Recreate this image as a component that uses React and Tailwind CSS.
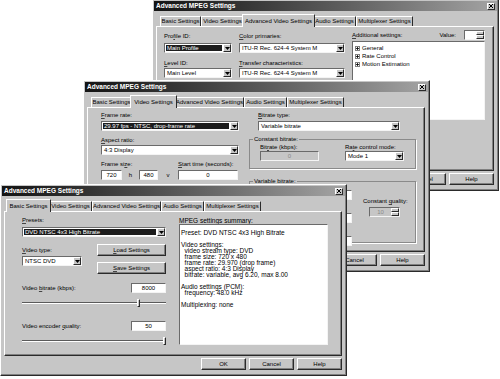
import React from 'react'

const TABS = [
  ['Basic Settings', 'w-[41px]'],
  ['Video Settings', 'w-[43px]'],
  ['Advanced Video Settings', 'w-[69px]'],
  ['Audio Settings', 'w-[43px]'],
  ['Multiplexer Settings', 'w-[57px]'],
]

const raised = 'border border-t-white border-l-white border-b-[#2a2a2a] border-r-[#2a2a2a]'
const sunken = 'border border-t-[#6a6a6a] border-l-[#6a6a6a] border-b-[#f4f4f4] border-r-[#f4f4f4]'

const U = ({ children }) => <span className="underline underline-offset-[1px] decoration-[#444]">{children}</span>

const Arrow = () => (
  <div className={`w-[8px] h-full bg-[#c6c6c6] ${raised} flex items-center justify-center shrink-0`}>
    <svg width="5" height="3" viewBox="0 0 5 3"><path d="M0 0h5L2.5 3z" fill="#000" /></svg>
  </div>
)

const Select = ({ value, w, hi }) => (
  <div className={`${w} h-[10px] bg-white ${sunken} flex items-stretch`}>
    <div className={`flex-1 m-[1px] flex items-center px-[1px] leading-[6px] whitespace-nowrap overflow-hidden ${hi ? 'bg-[#1c1c1c] text-white' : ''}`}>{value}</div>
    <Arrow />
  </div>
)

const Field = ({ value, w, disabled }) => (
  <div className={`${w} h-[10px] ${disabled ? 'bg-[#c6c6c6] text-[#8a8a8a]' : 'bg-white'} ${sunken} flex items-center justify-center`}>{value}</div>
)

const Spin = ({ value, w, disabled }) => (
  <div className={`${w} h-[10px] ${disabled ? 'bg-[#c6c6c6] text-[#8a8a8a]' : 'bg-white'} ${sunken} flex items-stretch`}>
    <div className="flex-1 flex items-center justify-center">{value}</div>
    <div className="w-[8px] flex flex-col">
      <div className={`flex-1 bg-[#c6c6c6] ${raised}`} />
      <div className={`flex-1 bg-[#c6c6c6] ${raised}`} />
    </div>
  </div>
)

const Btn = ({ children, w = 'w-[45px]' }) => (
  <div className={`${w} h-[12px] bg-[#c6c6c6] ${raised} shadow-[inset_-1px_-1px_0_#808080] flex items-center justify-center`}>{children}</div>
)

const Slider = ({ pos }) => (
  <div className="relative h-[10px] flex items-center">
    <div className="w-full h-[2px] border-t border-t-[#5a5a5a] border-b border-b-white" />
    <div className={`absolute top-[1px] ${pos} w-[3px] h-[8px] bg-[#c6c6c6] ${raised}`} />
  </div>
)

const Tabs = ({ active }) => (
  <div className="h-[15px] pl-[6px] flex items-end">
    {TABS.map(([t, w], i) =>
      i === active ? (
        <div key={t} className={`${w} box-content h-[12px] -mx-[2px] px-[1px] -mb-[1px] relative z-10 bg-[#c6c6c6] border border-b-0 border-t-white border-l-white border-r-[#2a2a2a] flex items-center justify-center whitespace-nowrap`}>{t}</div>
      ) : (
        <div key={t} className={`${w} h-[10px] border border-b-0 border-t-white border-l-white border-r-[#2a2a2a] flex items-center justify-center whitespace-nowrap`}>{t}</div>
      )
    )}
  </div>
)

const Window = ({ pos, active, children }) => (
  <div className={`absolute ${pos} w-[347px] h-[192px] bg-[#c6c6c6] p-[1px] ${raised} shadow-[inset_-1px_-1px_0_#808080] flex flex-col`}>
    <div className="h-[10px] bg-linear-to-r from-[#141414] to-[#a4a4a4] flex items-center justify-between pl-[2px] pr-[2px]">
      <span className="text-white font-bold text-[6.5px] leading-none">Advanced MPEG Settings</span>
      <div className={`w-[8px] h-[7px] bg-[#c6c6c6] ${raised} flex items-center justify-center`}>
        <svg width="4" height="4" viewBox="0 0 4 4"><path d="M0 0L4 4M4 0L0 4" stroke="#000" strokeWidth="1" /></svg>
      </div>
    </div>
    <Tabs active={active} />
    <div className="ml-[2px] mr-[3px] h-[145px] border border-t-white border-l-white border-b-[#2a2a2a] border-r-[#2a2a2a] shadow-[inset_-1px_-1px_0_#808080] flex">
      {children}
    </div>
    <div className="mt-[2px] pr-[3px] flex justify-end gap-[3px]">
      <Btn>OK</Btn>
      <Btn>Cancel</Btn>
      <Btn>Help</Btn>
    </div>
  </div>
)

const Plus = () => (
  <div className="w-[5px] h-[5px] border border-[#808080] bg-white flex items-center justify-center mr-[2px]">
    <svg width="3" height="3" viewBox="0 0 3 3"><path d="M0 1.5h3M1.5 0v3" stroke="#000" strokeWidth="0.8" /></svg>
  </div>
)

const AdvancedWindow = () => (
  <Window pos="left-[152px] top-[-1px]" active={2}>
    <div className="ml-[7px] pt-[6px] w-[68px] flex flex-col">
      <div className="h-[7px] leading-[7px]">Pro<U>f</U>ile ID:</div>
      <div className="mt-[3px]"><Select w="w-[68px]" value="Main Profile" hi /></div>
      <div className="mt-[7px] h-[7px] leading-[7px]"><U>L</U>evel ID:</div>
      <div className="mt-[1px]"><Select w="w-[68px]" value="Main Level" /></div>
    </div>
    <div className="ml-[7px] pt-[6px] w-[106px] flex flex-col">
      <div className="h-[7px] leading-[7px]"><U>C</U>olor primaries:</div>
      <div className="mt-[3px]"><Select w="w-[106px]" value="ITU-R Rec. 624-4 System M" /></div>
      <div className="mt-[7px] h-[7px] leading-[7px]"><U>T</U>ransfer characteristics:</div>
      <div className="mt-[1px]"><Select w="w-[106px]" value="ITU-R Rec. 624-4 System M" /></div>
    </div>
    <div className="ml-[7px] pt-[3px] w-[133px] flex flex-col">
      <div className="h-[10px] flex items-center">
        <span><U>A</U>dditional settings:</span>
        <span className="ml-auto mr-[8px]">Value:</span>
        <Spin w="w-[21px]" value="" />
      </div>
      <div className={`mt-[1px] h-[79px] bg-white ${sunken} pt-[2px] pl-[2px] leading-[8px]`}>
        {['General', 'Rate Control', 'Motion Estimation'].map(t => (
          <div key={t} className="h-[8px] flex items-center"><Plus />{t}</div>
        ))}
      </div>
    </div>
  </Window>
)

const VideoWindow = () => (
  <Window pos="left-[83px] top-[80px]" active={1}>
    <div className="ml-[13px] pt-[4px] w-[138px] flex flex-col">
      <div className="h-[7px] leading-[7px]"><U>F</U>rame rate:</div>
      <div className="mt-[2px]"><Select w="w-[138px]" value="29.97 fps - NTSC, drop-frame rate" hi /></div>
      <div className="mt-[6px] h-[7px] leading-[7px]"><U>A</U>spect ratio:</div>
      <div className="mt-[1px]"><Select w="w-[138px]" value="4:3 Display" /></div>
      <div className="mt-[6px] h-[7px] leading-[7px] flex">
        <span className="w-[77px]">Frame si<U>z</U>e:</span>
        <span><U>S</U>tart time (seconds):</span>
      </div>
      <div className="mt-[2px] flex items-center">
        <Field w="w-[21px]" value="720" />
        <span className="w-[17px] text-center">h</span>
        <Field w="w-[19px]" value="480" />
        <span className="w-[20px] text-center">v</span>
        <Field w="w-[60px]" value="0" />
      </div>
    </div>
    <div className="ml-[10px] pt-[4px] w-[167px] flex flex-col">
      <div className="pl-[9px] h-[7px] leading-[7px]"><U>B</U>itrate type:</div>
      <div className="pl-[9px] mt-[2px]"><Select w="w-[142px]" value="Variable bitrate" /></div>
      <fieldset className="mt-[5px] h-[33px] border border-[#8a8a8a] shadow-[1px_1px_0_white]">
        <legend className="ml-[3px] px-[1px] h-[7px] leading-[7px]">Constant bitrate:</legend>
        <div className="flex pt-[1px]">
          <div className="ml-[10px] w-[59px]">
            <div className="h-[7px] leading-[7px]">Bit<U>r</U>ate (kbps):</div>
            <Field w="w-[59px]" value="0" disabled />
          </div>
          <div className="ml-[26px] w-[59px]">
            <div className="h-[7px] leading-[7px]">Ra<U>t</U>e control mode:</div>
            <Select w="w-[59px]" value="Mode 1" />
          </div>
        </div>
      </fieldset>
      <fieldset className="mt-[9px] h-[65px] border border-[#8a8a8a] shadow-[1px_1px_0_white]">
        <legend className="ml-[3px] px-[1px] h-[7px] leading-[7px]">Variable bitrate:</legend>
        <div className="flex">
          <div className="ml-[10px] w-[92px] flex flex-col gap-[9px] pt-[3px]">
            {['Average bitrate (kbps):', 'Maximum bitrate (kbps):', 'Minimum bitrate (kbps):'].map(t => (
              <div key={t} className="flex items-center justify-between">
                <span>{t}</span>
                <Field w="w-[34px]" value="" />
              </div>
            ))}
          </div>
          <div className="ml-[11px] pt-[13px]">
            <div className="h-[7px] leading-[7px]">Constant <U>q</U>uality:</div>
            <div className="ml-[6px] mt-[2px]"><Spin w="w-[31px]" value="10" disabled /></div>
          </div>
        </div>
      </fieldset>
    </div>
  </Window>
)

const SUMMARY = [
  'Preset: DVD NTSC 4x3 High Bitrate',
  '',
  'Video settings:',
  '  video stream type: DVD',
  '  frame size: 720 x 480',
  '  frame rate: 29.970 (drop frame)',
  '  aspect ratio: 4:3 Display',
  '  bitrate: variable, avg 6.20, max 8.00',
  '',
  'Audio settings (PCM):',
  '  frequency: 48.0 kHz',
  '',
  'Multiplexing: none',
]

const BasicWindow = () => (
  <Window pos="left-[0px] top-[184px]" active={0}>
    <div className="ml-[17px] pt-[5px] w-[144px] flex flex-col">
      <div className="h-[7px] leading-[7px]"><U>P</U>resets:</div>
      <div className="mt-[3px]"><Select w="w-[144px]" value="DVD NTSC 4x3 High Bitrate" hi /></div>
      <div className="mt-[7px] flex">
        <div className="pt-[3px]">
          <div className="h-[7px] leading-[7px]"><U>V</U>ideo type:</div>
          <div className="mt-[2px]"><Select w="w-[60px]" value="NTSC DVD" /></div>
        </div>
        <div className="ml-auto flex flex-col gap-[6px]">
          <Btn w="w-[69px]"><span><U>L</U>oad Settings</span></Btn>
          <Btn w="w-[69px]"><span><U>S</U>ave Settings</span></Btn>
        </div>
      </div>
      <div className="mt-[9px] h-[10px] flex items-center justify-between">
        <span>Video <U>b</U>itrate (kbps):</span>
        <Field w="w-[35px]" value="8000" />
      </div>
      <div className="mt-[5px]"><Slider pos="left-[115px]" /></div>
      <div className="mt-[13px] h-[10px] flex items-center justify-between">
        <span>Video encoder <U>q</U>uality:</span>
        <Field w="w-[35px]" value="50" />
      </div>
      <div className="mt-[5px]"><Slider pos="left-[141px]" /></div>
    </div>
    <div className="ml-[13px] pt-[5px] w-[149px] flex flex-col">
      <div className="h-[7px] leading-[7px] text-[6.5px]">MPEG settings summary:</div>
      <div className={`h-[121px] bg-white ${sunken} pt-[5px] pl-[1px] text-[6.5px] leading-[6px] whitespace-pre overflow-hidden`}>
        {SUMMARY.map((l, i) => <div key={i} className="h-[6px]">{l}</div>)}
      </div>
    </div>
  </Window>
)

export default function App() {
  return (
    <div className="relative w-[500px] h-[379px] overflow-hidden bg-white text-black text-[6px] leading-[7px] font-['Liberation_Sans',Arial,sans-serif]">
      <AdvancedWindow />
      <VideoWindow />
      <BasicWindow />
    </div>
  )
}
